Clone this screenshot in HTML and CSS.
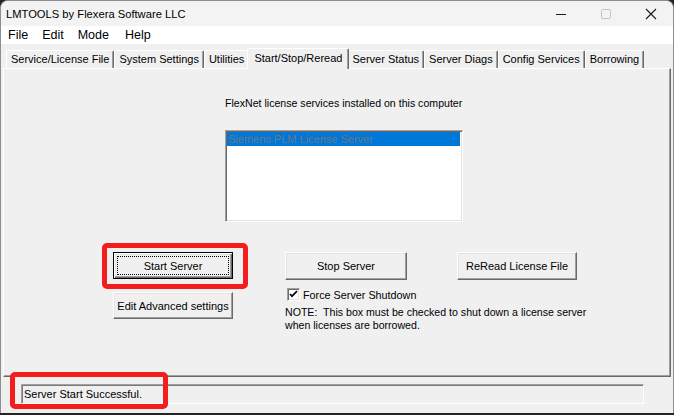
FILE: index.html
```html
<!DOCTYPE html>
<html>
<head>
<meta charset="utf-8">
<link rel="stylesheet" href="styles.css">
</head>
<body>
<div class="window">
  <div class="titlebar">
    <span class="title">LMTOOLS by Flexera Software LLC</span>
    <div class="caption-btns">
      <span class="cbtn"><svg width="12" height="12" viewBox="0 0 12 12"><line x1="1" y1="6.5" x2="11" y2="6.5" stroke="#1a1a1a" stroke-width="1"/></svg></span>
      <span class="cbtn"><svg width="12" height="12" viewBox="0 0 12 12"><rect x="1.5" y="1.5" width="9" height="9" rx="1" fill="none" stroke="#c2c2c2" stroke-width="1"/></svg></span>
      <span class="cbtn"><svg width="12" height="12" viewBox="0 0 12 12"><path d="M1 1 L11 11 M11 1 L1 11" stroke="#1a1a1a" stroke-width="1.1" fill="none"/></svg></span>
    </div>
  </div>
  <div class="menubar">
    <span class="menu-item">File</span>
    <span class="menu-item">Edit</span>
    <span class="menu-item">Mode</span>
    <span class="menu-item">Help</span>
  </div>
  <div class="tabs">
    <div class="tab">Service/License File</div>
    <div class="tab">System Settings</div>
    <div class="tab">Utilities</div>
    <div class="tab active">Start/Stop/Reread</div>
    <div class="tab">Server Status</div>
    <div class="tab">Server Diags</div>
    <div class="tab">Config Services</div>
    <div class="tab">Borrowing</div>
  </div>
  <div class="panel">
    <div class="services">
      <div class="services-label">FlexNet license services installed on this computer</div>
      <div class="listbox">
        <div class="list-item">Siemens PLM License Server</div>
      </div>
    </div>
    <div class="controls">
      <div class="col-left">
        <button class="btn btn-default"><span class="focus">Start Server</span></button>
        <button class="btn btn-left">Edit Advanced settings</button>
      </div>
      <div class="col-right">
        <div class="btn-row">
          <button class="btn btn-stop">Stop Server</button>
          <button class="btn btn-reread">ReRead License File</button>
        </div>
        <div class="check">
          <span class="checkbox"><svg width="11" height="11" viewBox="0 0 11 11"><path d="M2 5 L4 7.2 L9 2.2" stroke="#000" stroke-width="1.7" fill="none"/></svg></span>
          <span>Force Server Shutdown</span>
        </div>
        <p class="note">NOTE:&nbsp; This box must be checked to shut down a license server<br>when licenses are borrowed.</p>
      </div>
    </div>
  </div>
  <div class="statusbar">
    <div class="status-field">Server Start Successful.</div>
  </div>
  <span class="highlight hl-start"></span>
  <span class="highlight hl-status"></span>
</div>
</body>
</html>
```

FILE: styles.css
```css
html, body {
  margin: 0;
  padding: 0;
}
body {
  width: 674px;
  height: 415px;
  overflow: hidden;
  background: #262320;
  font-family: "Liberation Sans", Arial, sans-serif;
  color: #000;
}
.window {
  position: relative;
  width: 674px;
  height: 413px;
  box-sizing: border-box;
  border: 1px solid #8e8e8e;
  border-bottom: none;
  border-radius: 8px 8px 0 0;
  background: #f0f0f0;
  overflow: hidden;
  display: flex;
  flex-direction: column;
}
.titlebar {
  height: 25px;
  flex: none;
  display: flex;
  align-items: center;
  background: #f3f3f3;
}
.title {
  padding-left: 5px;
  font-size: 11.2px;
  color: #000;
}
.caption-btns {
  margin-left: auto;
  display: flex;
  height: 100%;
}
.cbtn {
  width: 45px;
  display: flex;
  align-items: center;
  justify-content: center;
}
.menubar {
  height: 18px;
  flex: none;
  background: #fff;
  display: flex;
  align-items: center;
  font-size: 12.5px;
}
.menu-item {
  padding: 0 7px;
}
.menu-item:nth-child(3) {
  padding-right: 9px;
}
.tabs {
  height: 24px;
  flex: none;
  display: flex;
  align-items: flex-end;
  padding-left: 5px;
  position: relative;
  z-index: 2;
}
.tab {
  height: 18px;
  box-sizing: border-box;
  padding: 0 4px;
  font-size: 11px;
  line-height: 16px;
  white-space: nowrap;
  background: #f0f0f0;
  border-top: 1px solid #fff;
  border-left: 1px solid #fff;
  border-right: 1px solid #696969;
  box-shadow: inset -1px 0 #a0a0a0;
  border-radius: 2px 2px 0 0;
}
.tab.active {
  height: 21px;
  margin: 0 -2px -1px -2px;
  padding: 1px 6px 0 6px;
  position: relative;
  z-index: 3;
}
.panel {
  flex: none;
  height: 309px;
  margin: 0 2px;
  box-sizing: border-box;
  border: 1px solid;
  border-color: #fff #696969 #696969 #fff;
  box-shadow: inset -1px -1px #a0a0a0;
  padding-top: 28px;
  position: relative;
  z-index: 1;
}
.services {
  margin-left: 221px;
  width: 238px;
}
.services-label {
  font-size: 10.6px;
  line-height: 13px;
  white-space: nowrap;
}
.listbox {
  margin-top: 20px;
  height: 92px;
  box-sizing: border-box;
  background: #fff;
  border: 1px solid;
  border-color: #a0a0a0 #fff #fff #a0a0a0;
  box-shadow: inset 1px 1px #696969, inset -1px -1px #e3e3e3;
  padding: 1px 2px 1px 1px;
}
.list-item {
  height: 14px;
  line-height: 14px;
  background: #0078d7;
  color: #6f7580;
  font-size: 11px;
  padding-left: 1px;
  white-space: nowrap;
}
.controls {
  display: flex;
  margin-top: 30px;
  margin-left: 109px;
}
.col-left {
  width: 120px;
  display: flex;
  flex-direction: column;
  gap: 13px;
}
.col-right {
  margin-left: 52px;
}
.btn {
  box-sizing: border-box;
  height: 28px;
  padding: 0;
  margin: 0;
  font-family: "Liberation Sans", Arial, sans-serif;
  font-size: 11px;
  color: #000;
  background: #f0f0f0;
  border: 1px solid;
  border-color: #fff #696969 #696969 #fff;
  box-shadow: inset -1px -1px #a0a0a0, inset 1px 1px #e3e3e3;
  border-radius: 0;
}
.btn-left {
  width: 120px;
  height: 27px;
}
.btn-default {
  width: 120px;
  height: 27px;
  border: 1px solid #000;
  box-shadow: inset 1px 1px #fff, inset -1px -1px #696969, inset -2px -2px #a0a0a0, inset 2px 2px #e3e3e3;
  display: flex;
  padding: 3px;
}
.focus {
  flex: 1;
  display: flex;
  align-items: center;
  justify-content: center;
  border: 1px dotted #000;
}
.btn-row {
  display: flex;
  gap: 50px;
}
.btn-stop {
  width: 122px;
}
.btn-reread {
  width: 120px;
}
.check {
  margin-top: 8px;
  height: 13px;
  display: flex;
  align-items: center;
  gap: 3px;
  font-size: 10.8px;
}
.checkbox {
  margin-left: 2px;
  width: 13px;
  height: 13px;
  box-sizing: border-box;
  background: #fff;
  border: 1px solid;
  border-color: #a0a0a0 #fff #fff #a0a0a0;
  box-shadow: inset 1px 1px #696969, inset -1px -1px #e3e3e3;
  display: flex;
  align-items: center;
  justify-content: center;
}
.checkbox svg {
  display: block;
}
.note {
  margin: 5px 0 0 0;
  font-size: 10.6px;
  line-height: 13px;
  white-space: nowrap;
}
.statusbar {
  flex: none;
  padding: 7px 0 0 20px;
}
.status-field {
  width: 623px;
  height: 20px;
  box-sizing: border-box;
  border: 1px solid;
  border-color: #a0a0a0 #fff #fff #a0a0a0;
  box-shadow: inset 1px 1px #7a7a7a;
  font-size: 11px;
  line-height: 18px;
  padding-left: 2px;
}
.highlight {
  position: absolute;
  box-sizing: border-box;
  border: 5px solid #f41c1c;
  border-radius: 5px;
  pointer-events: none;
  z-index: 10;
}
.hl-start {
  left: 101px;
  top: 242px;
  width: 146px;
  height: 46px;
}
.hl-status {
  left: 9px;
  top: 371px;
  width: 158px;
  height: 37px;
}
```
